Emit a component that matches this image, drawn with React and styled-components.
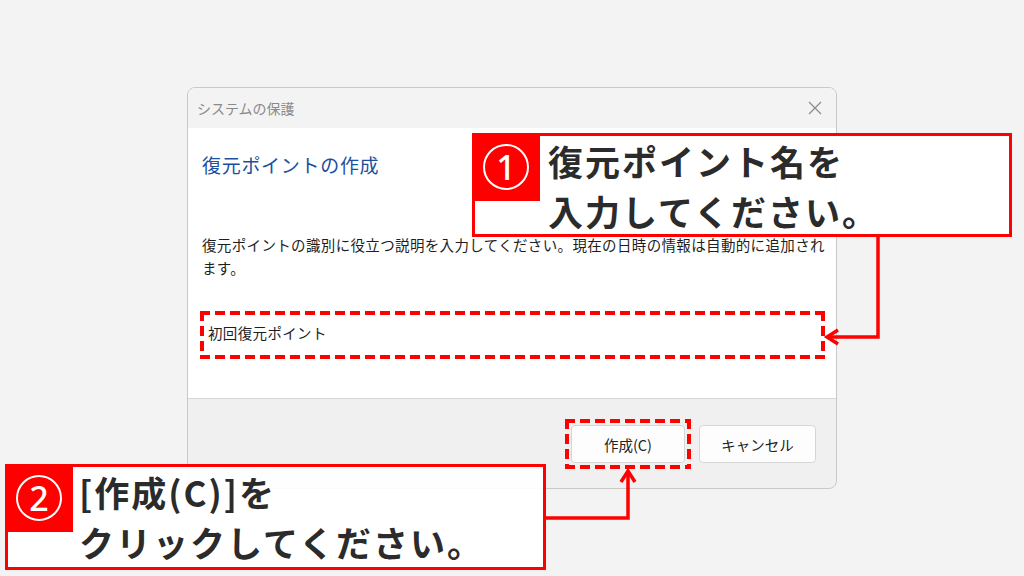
import React from "react";
import styled, { createGlobalStyle } from "styled-components";

const Global = createGlobalStyle`
  html, body { margin: 0; padding: 0; }
  body {
    background: #f3f3f3;
    font-family: "Noto Sans CJK JP", "Noto Sans", sans-serif;
  }
`;

const Page = styled.div`
  position: relative;
  width: 1024px;
  height: 576px;
  overflow: hidden;
  background: #f3f3f3;
  display: flex;
  justify-content: center;
  align-items: flex-start;
  padding-top: 87px;
  box-sizing: border-box;
`;

const Dialog = styled.div`
  width: 650px;
  height: 402px;
  box-sizing: border-box;
  border: 1px solid #c9c9c9;
  border-radius: 8px;
  overflow: hidden;
  display: flex;
  flex-direction: column;
  background: #f0f0f0;
`;

const TitleBar = styled.div`
  height: 40px;
  flex: none;
  display: flex;
  align-items: center;
  justify-content: space-between;
  padding: 0 14px 0 9px;
  background: #f3f3f3;
  color: #8a8a8a;
  font-size: 14px;
`;

const Body = styled.div`
  flex: none;
  height: 270px;
  background: #ffffff;
  border-bottom: 1px solid #d5d5d5;
  padding: 0 14px;
  display: flex;
  flex-direction: column;
`;

const Heading = styled.div`
  margin-top: 24px;
  font-size: 19px;
  letter-spacing: 0.7px;
  line-height: 26px;
  color: #1d4f9f;
`;

const Description = styled.div`
  margin-top: 55px;
  width: 632px;
  font-size: 14.5px;
  letter-spacing: 0.35px;
  line-height: 23px;
  color: #1e1e1e;
`;

const dash = (angle) =>
  `repeating-linear-gradient(${angle}, #ff0000 0 10px, transparent 10px 15px)`;

const Highlight = styled.div`
  box-sizing: border-box;
  padding: 4px;
  background:
    ${dash("90deg")} top left / 100% 4px no-repeat,
    ${dash("90deg")} bottom left / 100% 4px no-repeat,
    ${dash("180deg")} top left / 4px 100% no-repeat,
    ${dash("180deg")} top right / 4px 100% no-repeat;
`;

const InputWrap = styled(Highlight)`
  margin-top: 32px;
  margin-left: -2px;
  width: 625px;
  height: 48px;
  display: flex;
`;

const TextInput = styled.div`
  flex: 1;
  background: #ffffff;
  display: flex;
  align-items: flex-start;
  padding: 7px 4px 0;
  font-size: 14.5px;
  letter-spacing: 0.35px;
  color: #1e1e1e;
`;

const Footer = styled.div`
  flex: 1;
  display: flex;
  justify-content: flex-end;
  align-items: flex-start;
  padding: 26px 20px 0 0;
  gap: 8px;
`;

const Button = styled.div`
  width: ${(p) => p.$w || 116}px;
  height: 38px;
  box-sizing: border-box;
  background: #fdfdfd;
  border: 1px solid #d6d6d6;
  border-radius: 4px;
  display: flex;
  align-items: center;
  justify-content: center;
  font-size: 14.5px;
  color: #222;
`;

const ButtonHighlight = styled(Highlight)`
  padding: 6px;
  margin-top: -6px;
`;

const Callout = styled.div`
  position: absolute;
  left: ${(p) => p.$x}px;
  top: ${(p) => p.$y}px;
  width: ${(p) => p.$w}px;
  height: ${(p) => p.$h}px;
  box-sizing: border-box;
  border: 3px solid #ff0000;
  background: rgba(255, 255, 255, 0.93);
  display: flex;
  align-items: flex-start;
`;

const Badge = styled.div`
  flex: none;
  width: ${(p) => p.$w}px;
  height: ${(p) => p.$h}px;
  margin: -3px 0 0 -3px;
  background: #ff0000;
  color: #fff;
  display: flex;
  align-items: center;
  justify-content: center;
`;

const Num = styled.div`
  width: 46px;
  height: 46px;
  box-sizing: border-box;
  border: 2px solid #fff;
  border-radius: 50%;
  display: flex;
  align-items: center;
  justify-content: center;
  font-family: "Noto Sans", "Open Sans", sans-serif;
  font-size: 34px;
  font-weight: 500;
  line-height: 1;
`;

const CalloutText = styled.div`
  padding: ${(p) => p.$pad};
  font-size: 35px;
  font-weight: 700;
  letter-spacing: 2px;
  line-height: 50px;
  color: #2b2b2b;
  white-space: nowrap;
`;

const Overlay = styled.svg`
  position: absolute;
  left: 0;
  top: 0;
  pointer-events: none;
`;

const CloseIcon = () => (
  <svg width="14" height="14" viewBox="0 0 14 14">
    <path d="M1 1L13 13M13 1L1 13" stroke="#8a8a8a" strokeWidth="1.2" fill="none" />
  </svg>
);

export default function App() {
  return (
    <>
      <Global />
      <Page>
        <Dialog>
          <TitleBar>
            <span>システムの保護</span>
            <CloseIcon />
          </TitleBar>
          <Body>
            <Heading>復元ポイントの作成</Heading>
            <Description>
              復元ポイントの識別に役立つ説明を入力してください。現在の日時の情報は自動的に追加されます。
            </Description>
            <InputWrap>
              <TextInput>初回復元ポイント</TextInput>
            </InputWrap>
          </Body>
          <Footer>
            <ButtonHighlight>
              <Button $w={114}>作成(C)</Button>
            </ButtonHighlight>
            <Button $w={117}>キャンセル</Button>
          </Footer>
        </Dialog>

        <Callout $x={472} $y={133} $w={540} $h={104}>
          <Badge $w={68} $h={68}>
            <Num>1</Num>
          </Badge>
          <CalloutText $pad="0 0 0 8px">
            復元ポイント名を
            <br />
            入力してください。
          </CalloutText>
        </Callout>

        <Callout $x={5} $y={464} $w={541} $h={106}>
          <Badge $w={68} $h={68}>
            <Num>2</Num>
          </Badge>
          <CalloutText $pad="0 0 0 6px">
            [作成(C)]を
            <br />
            クリックしてください。
          </CalloutText>
        </Callout>

        <Overlay width="1024" height="576" viewBox="0 0 1024 576">
          <g stroke="#ff0000" strokeWidth="3.5" fill="none" strokeLinejoin="miter">
            <polyline points="878,237 878,337 828,337" />
            <polyline points="838,330 827,337 838,344" />
            <polyline points="546,518 628,518 628,472" />
            <polyline points="621,482 628,471 635,482" />
          </g>
        </Overlay>
      </Page>
    </>
  );
}
